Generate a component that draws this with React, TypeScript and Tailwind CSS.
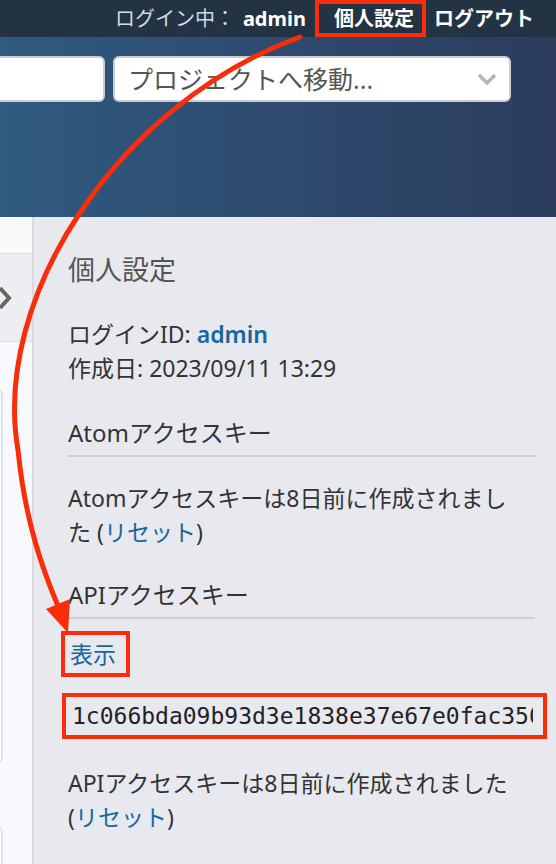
import React from "react";

const RED = "#fa2d0a";

function Arrow() {
  return (
    <svg
      className="absolute inset-0 pointer-events-none"
      width={556}
      height={864}
      viewBox="0 0 556 864"
    >
      <path
        d="M300 37 C 115 105, -8 300, 18 450 C 25 520, 42 568, 58 606"
        fill="none"
        stroke={RED}
        strokeWidth={5}
        strokeLinecap="round"
      />
      <polygon points="46,609 70,599 68,633" fill={RED} />
    </svg>
  );
}

function TopMenu() {
  return (
    <div className="h-[37px] bg-[#243343] flex items-center justify-end pr-[22px] text-[20px] leading-none">
      <span className="text-[#d5dbe2]">ログイン中：</span>
      <span className="ml-[8px] font-bold text-white">admin</span>
      <span className="ml-[9px] h-[37px] flex items-center border-4 border-[#fa2d0a] pl-[15px] pr-[8px] font-bold text-white">
        個人設定
      </span>
      <span className="ml-[8px] font-bold text-white">ログアウト</span>
    </div>
  );
}

function Header() {
  return (
    <div className="h-[180px] bg-gradient-to-r from-[#305a81] to-[#2b3c5d] pt-[19px]">
      <div className="flex gap-[8px]">
        <div className="ml-[-40px] w-[145px] h-[46px] bg-white rounded-[6px] border-2 border-[#c9ccd1]" />
        <div className="w-[398px] h-[46px] bg-white rounded-[6px] border-2 border-[#c9ccd1] flex items-center pl-[13px] pr-[12px]">
          <span className="flex-1 text-[25px] text-[#555] leading-none">プロジェクトへ移動...</span>
          <svg width="20" height="12" viewBox="0 0 20 12">
            <polyline points="2,2 10,10 18,2" fill="none" stroke="#b5b5b5" strokeWidth="3.5" />
          </svg>
        </div>
      </div>
    </div>
  );
}

function LeftColumn() {
  return (
    <div className="w-[34px] shrink-0 bg-[#f8f9fc] border-r-2 border-[#d9dade] overflow-hidden">
      <div className="h-[36px] bg-[#f9fafc]" />
      <div className="h-[89px] bg-[#eceef1] border-y border-[#dcdee2] flex items-center">
        <svg width="12" height="24" viewBox="0 0 12 24">
          <polyline points="0,2 9,12 0,22" fill="none" stroke="#666" strokeWidth="4" />
        </svg>
      </div>
      <div className="mt-[47px] ml-[-37px] w-[40px] h-[374px] rounded-[6px] border-2 border-[#dde2e8] bg-white" />
      <div className="mt-[63px] ml-[-37px] w-[40px] h-[120px] rounded-[6px] border-2 border-[#dde2e8] bg-white" />
    </div>
  );
}

function Sidebar() {
  return (
    <div className="flex-1 min-w-0 bg-[#e8e9ef] pl-[34px] pr-[21px] flex flex-col text-[#333] text-[23px] leading-[34px]">
      <h3 className="mt-[36px] text-[27px] leading-[34px] text-[#555]">個人設定</h3>
      <p className="mt-[30px]">
        ログインID: <span className="font-semibold text-[#16679f]">admin</span>
        <br />
        作成日: 2023/09/11 13:29
      </p>
      <h4 className="mt-[31px] text-[24px] leading-[34px] pb-[5px] border-b-2 border-[#cdced3]">
        Atomアクセスキー
      </h4>
      <p className="mt-[24px] whitespace-nowrap">
        Atomアクセスキーは8日前に作成されまし
        <br />
        た (<span className="text-[#16679f]">リセット</span>)
      </p>
      <h4 className="mt-[29px] text-[24px] leading-[34px] pb-[5px] border-b-2 border-[#cdced3]">
        APIアクセスキー
      </h4>
      <div className="mt-[12px] self-start ml-[-7px] h-[46px] border-4 border-[#fa2d0a] pl-[5px] pr-[10px] leading-[38px] text-[#16679f]">
        表示
      </div>
      <div className="mt-[16px] ml-[-6px] mr-[-12px] h-[46px] border-4 border-[#fa2d0a] pl-[6px] pr-[10px] flex items-center min-w-0">
        <div className="flex-1 min-w-0 overflow-hidden whitespace-nowrap font-['DejaVu_Sans_Mono',monospace] text-[23px] leading-none text-[#222]">
          1c066bda09b93d3e1838e37e67e0fac350f7c1a2
        </div>
      </div>
      <p className="mt-[27px] whitespace-nowrap">
        APIアクセスキーは8日前に作成されました
        <br />
        (<span className="text-[#16679f]">リセット</span>)
      </p>
    </div>
  );
}

export default function App() {
  return (
    <div className="relative w-[556px] h-[864px] overflow-hidden font-['Noto_Sans','Noto_Sans_CJK_JP',sans-serif]">
      <TopMenu />
      <Header />
      <div className="flex h-[647px]">
        <LeftColumn />
        <Sidebar />
      </div>
      <Arrow />
    </div>
  );
}
